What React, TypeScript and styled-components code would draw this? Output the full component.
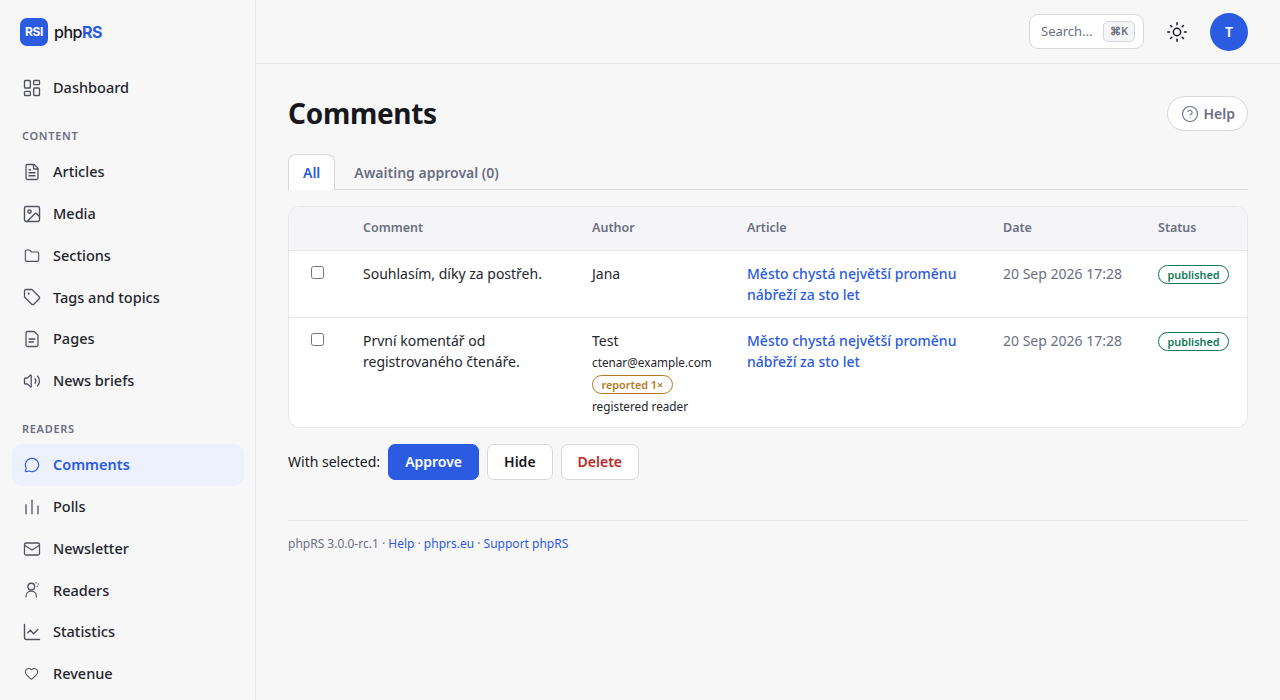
import React from 'react'
import styled, { createGlobalStyle } from 'styled-components'
import {
    LayoutDashboard,
    FileText,
    Image,
    Folder,
    Tag,
    Volume2,
    MessageCircle,
    Mail,
    ChartLine,
    Heart,
    Sun,
    CircleHelp,
} from 'lucide-react'

type DrawnIconProps = { size?: number; strokeWidth?: number }

const DrawnIcon = ({
    size,
    strokeWidth,
    children,
}: DrawnIconProps & { children: React.ReactNode }) => (
    <svg
        width={size}
        height={size}
        viewBox="0 0 24 24"
        fill="none"
        stroke="currentColor"
        strokeWidth={strokeWidth}
        strokeLinecap="round"
        strokeLinejoin="round"
    >
        {children}
    </svg>
)

const PageIcon = (props: DrawnIconProps) => (
    <DrawnIcon {...props}>
        <path d="M15 2H6a2 2 0 0 0-2 2v16a2 2 0 0 0 2 2h12a2 2 0 0 0 2-2V7z" />
        <path d="M8 12h8" />
        <path d="M8 16h6" />
    </DrawnIcon>
)

const PollIcon = (props: DrawnIconProps) => (
    <DrawnIcon {...props}>
        <path d="M4 21V9" />
        <path d="M12 21V3" />
        <path d="M20 21V11" />
    </DrawnIcon>
)

const ReaderIcon = (props: DrawnIconProps) => (
    <DrawnIcon {...props}>
        <circle cx="11" cy="7.5" r="4.5" />
        <path d="M4 21c0-4.5 3-7.5 7-7.5s7 3 7 7.5" />
        <path d="M17.5 2.5v.01M20.5 4v.01M19 7v.01" />
    </DrawnIcon>
)

const contentNav = [
    { label: 'Articles', icon: FileText, size: 18 },
    { label: 'Media', icon: Image, size: 20 },
    { label: 'Sections', icon: Folder, size: 16 },
    { label: 'Tags and topics', icon: Tag, size: 18 },
    { label: 'Pages', icon: PageIcon, size: 18 },
    { label: 'News briefs', icon: Volume2, size: 18 },
]

const readerNav = [
    { label: 'Comments', icon: MessageCircle, size: 16, active: true },
    { label: 'Polls', icon: PollIcon, size: 18 },
    { label: 'Newsletter', icon: Mail, size: 18 },
    { label: 'Readers', icon: ReaderIcon, size: 18 },
    { label: 'Statistics', icon: ChartLine, size: 20 },
    { label: 'Revenue', icon: Heart, size: 15 },
]

const article = 'Město chystá největší proměnu nábřeží za sto let'

export default function App() {
    return (
        <Shell>
            <GlobalStyle />
            <Sidebar>
                <Brand>
                    <LogoMark>RSI</LogoMark>
                    <LogoText>
                        php<span>RS</span>
                    </LogoText>
                </Brand>
                <NavItem>
                    <NavIcon>
                        <LayoutDashboard size={20} strokeWidth={1.6} />
                    </NavIcon>
                    Dashboard
                </NavItem>
                <NavHeading>Content</NavHeading>
                {contentNav.map(item => (
                    <NavItem key={item.label}>
                        <NavIcon>
                            <item.icon size={item.size} strokeWidth={1.7} />
                        </NavIcon>
                        {item.label}
                    </NavItem>
                ))}
                <NavHeading>Readers</NavHeading>
                {readerNav.map(item => (
                    <NavItem key={item.label} $active={item.active}>
                        <NavIcon $active={item.active}>
                            <item.icon size={item.size} strokeWidth={1.7} />
                        </NavIcon>
                        {item.label}
                    </NavItem>
                ))}
            </Sidebar>
            <Main>
                <Topbar>
                    <SearchBox>
                        Search…<Kbd>⌘K</Kbd>
                    </SearchBox>
                    <ThemeToggle>
                        <Sun size={22} strokeWidth={1.6} />
                    </ThemeToggle>
                    <Avatar>T</Avatar>
                </Topbar>
                <Content>
                    <TitleRow>
                        <Title>Comments</Title>
                        <HelpButton>
                            <CircleHelp size={18} strokeWidth={1.5} />
                            Help
                        </HelpButton>
                    </TitleRow>
                    <Tabs>
                        <Tab $active>All</Tab>
                        <Tab>Awaiting approval (0)</Tab>
                    </Tabs>
                    <TableCard>
                        <Table>
                            <colgroup>
                                <col style={{ width: 59 }} />
                                <col style={{ width: 229 }} />
                                <col style={{ width: 155 }} />
                                <col style={{ width: 256 }} />
                                <col style={{ width: 155 }} />
                                <col />
                            </colgroup>
                            <thead>
                                <tr>
                                    <Th />
                                    <Th>Comment</Th>
                                    <Th>Author</Th>
                                    <Th>Article</Th>
                                    <Th>Date</Th>
                                    <Th>Status</Th>
                                </tr>
                            </thead>
                            <tbody>
                                <tr>
                                    <Td>
                                        <RowCheck type="checkbox" />
                                    </Td>
                                    <Td>Souhlasím, díky za postřeh.</Td>
                                    <Td>Jana</Td>
                                    <Td>
                                        <ArticleLink>{article}</ArticleLink>
                                    </Td>
                                    <DateCell>20 Sep 2026 17:28</DateCell>
                                    <Td>
                                        <Badge $tone="green">published</Badge>
                                    </Td>
                                </tr>
                                <tr>
                                    <Td>
                                        <RowCheck type="checkbox" />
                                    </Td>
                                    <Td>První komentář od registrovaného čtenáře.</Td>
                                    <AuthorCell>
                                        Test
                                        <AuthorMeta>ctenar@example.com</AuthorMeta>
                                        <AuthorMeta>
                                            <Badge $tone="amber">reported 1×</Badge>
                                        </AuthorMeta>
                                        <AuthorMeta>registered reader</AuthorMeta>
                                    </AuthorCell>
                                    <Td>
                                        <ArticleLink>{article}</ArticleLink>
                                    </Td>
                                    <DateCell>20 Sep 2026 17:28</DateCell>
                                    <Td>
                                        <Badge $tone="green">published</Badge>
                                    </Td>
                                </tr>
                            </tbody>
                        </Table>
                    </TableCard>
                    <BulkBar>
                        <BulkLabel>With selected:</BulkLabel>
                        <Button $variant="primary">Approve</Button>
                        <Button>Hide</Button>
                        <Button $variant="danger">Delete</Button>
                    </BulkBar>
                    <Footer>
                        phpRS 3.0.0-rc.1 · <FooterLink>Help</FooterLink> ·{' '}
                        <FooterLink>phprs.eu</FooterLink> · <FooterLink>Support phpRS</FooterLink>
                    </Footer>
                </Content>
            </Main>
        </Shell>
    )
}

const GlobalStyle = createGlobalStyle`
    html, body {
        margin: 0;
        height: 100%;
        overflow: hidden;
        background: #f7f7f8;
        color: #16181d;
        font-family: "Noto Sans", sans-serif;
        font-size: 14px;
        line-height: 1.5;
    }
`

const Shell = styled.div`
    display: flex;
    height: 700px;
    overflow: hidden;
`

const Sidebar = styled.aside`
    flex: 0 0 256px;
    box-sizing: border-box;
    border-right: 1px solid #e6e7ea;
    padding: 18px 11px 0 12px;
    overflow: hidden;
`

const Brand = styled.div`
    display: flex;
    align-items: center;
    gap: 6px;
    padding-left: 8px;
    height: 28px;
    margin-bottom: 21px;
`

const LogoMark = styled.div`
    width: 28px;
    height: 28px;
    border-radius: 7px;
    background: #2b5be0;
    color: #fff;
    font-family: Inter, sans-serif;
    font-size: 12px;
    font-weight: 700;
    letter-spacing: -0.4px;
    display: flex;
    align-items: center;
    justify-content: center;
`

const LogoText = styled.div`
    font-family: Inter, sans-serif;
    font-size: 16px;
    font-weight: 500;
    letter-spacing: -0.5px;

    span {
        color: #2b5be0;
        font-weight: 700;
    }
`

const NavItem = styled.div<{ $active?: boolean }>`
    display: flex;
    align-items: center;
    gap: 12px;
    padding: 10px;
    border-radius: 10px;
    font-size: 14.5px;
    font-weight: ${({ $active }) => ($active ? 600 : 500)};
    color: ${({ $active }) => ($active ? '#2b5be0' : '#24262c')};
    background: ${({ $active }) => ($active ? '#edf1fd' : 'transparent')};
`

const NavIcon = styled.span<{ $active?: boolean }>`
    display: flex;
    flex: 0 0 19px;
    min-width: 0;
    width: 19px;
    justify-content: center;
    align-items: center;
    height: 20px;
    color: ${({ $active }) => ($active ? '#2b5be0' : '#50535c')};

    svg {
        flex: none;
    }
`

const NavHeading = styled.div`
    padding: 0 10px;
    margin: 19.5px 0 7px;
    font-size: 11px;
    font-weight: 600;
    letter-spacing: 0.7px;
    line-height: 16px;
    text-transform: uppercase;
    color: #6b6f80;
`

const Main = styled.main`
    flex: 1;
    min-width: 0;
`

const Topbar = styled.header`
    height: 64px;
    box-sizing: border-box;
    border-bottom: 1px solid #e6e7ea;
    padding: 0 32px;
    display: flex;
    align-items: center;
    justify-content: flex-end;
`

const SearchBox = styled.div`
    box-sizing: border-box;
    width: 115px;
    height: 35px;
    border: 1px solid #d5d7dc;
    border-radius: 9px;
    background: #fff;
    padding: 0 8px 0 11px;
    display: flex;
    align-items: center;
    justify-content: space-between;
    font-size: 13px;
    color: #6b6f80;
`

const Kbd = styled.span`
    box-sizing: border-box;
    height: 21px;
    width: 32px;
    border: 1px solid #d5d7dc;
    border-radius: 5px;
    background: #f4f5f6;
    font-size: 11px;
    font-weight: 600;
    color: #6b6f80;
    display: flex;
    align-items: center;
    justify-content: center;
`

const ThemeToggle = styled.div`
    display: flex;
    margin: 0 22px 0 22px;
    color: #16181d;
`

const Avatar = styled.div`
    width: 38px;
    height: 38px;
    border-radius: 50%;
    background: #2b5be0;
    color: #fff;
    font-size: 14px;
    font-weight: 600;
    display: flex;
    align-items: center;
    justify-content: center;
`

const Content = styled.div`
    padding: 32px 32px 0;
`

const TitleRow = styled.div`
    display: flex;
    align-items: center;
    justify-content: space-between;
    height: 35px;
    margin-bottom: 23px;
`

const Title = styled.h1`
    margin: 0 0 2px;
    font-size: 28px;
    font-weight: 700;
    letter-spacing: -0.3px;
    color: #16181d;
`

const HelpButton = styled.div`
    box-sizing: border-box;
    height: 35px;
    border: 1px solid #d5d7dc;
    border-radius: 18px;
    background: #fff;
    padding: 0 12px 0 13px;
    display: flex;
    align-items: center;
    gap: 5px;
    font-weight: 600;
    color: #6b6f80;
`

const Tabs = styled.div`
    display: flex;
    gap: 4px;
    border-bottom: 1px solid #d5d7dc;
    height: 35px;
`

const Tab = styled.div<{ $active?: boolean }>`
    box-sizing: border-box;
    height: 36px;
    padding: 7px 14px;
    font-weight: 600;
    border: 1px solid ${({ $active }) => ($active ? '#d5d7dc' : 'transparent')};
    border-bottom: 0;
    border-radius: 8px 8px 0 0;
    color: ${({ $active }) => ($active ? '#2b5be0' : '#6b6f80')};
    background: ${({ $active }) => ($active ? '#fff' : 'transparent')};
`

const TableCard = styled.div`
    margin-top: 16px;
    border: 1px solid #e6e7ea;
    border-radius: 12px;
    background: #fff;
    overflow: hidden;
`

const Table = styled.table`
    width: 100%;
    border-collapse: collapse;
    table-layout: fixed;

    tbody tr + tr td {
        border-top: 1px solid #e6e7ea;
    }
`

const Th = styled.th`
    height: 43px;
    box-sizing: border-box;
    padding: 0 16px 0 15px;
    background: #f5f5f7;
    border-bottom: 1px solid #e6e7ea;
    text-align: left;
    font-size: 12.5px;
    font-weight: 600;
    color: #6b6f80;
`

const Td = styled.td`
    padding: 12px 16px 12px 15px;
    vertical-align: top;
    line-height: 21px;
    font-size: 14px;
    color: #24262c;
`

const DateCell = styled(Td)`
    color: #6b6f80;
`

const AuthorCell = styled(Td)`
    padding-bottom: 10px;
`

const RowCheck = styled.input`
    margin: 3px 0 0 7px;
    width: 13px;
    height: 13px;
`

const ArticleLink = styled.span`
    color: #2b5be0;
    font-weight: 500;
`

const AuthorMeta = styled.div`
    font-size: 11.75px;
    line-height: 22px;

    &:first-of-type {
        margin-top: 0.5px;
    }
`

const Badge = styled.span<{ $tone: 'green' | 'amber' }>`
    display: inline-block;
    box-sizing: border-box;
    height: 19px;
    line-height: 17px;
    padding: 0 8.5px;
    border-radius: 10px;
    background: #fff;
    font-size: 10.85px;
    font-weight: 600;
    border: 1px solid ${({ $tone }) => ($tone === 'green' ? '#0f7a55' : '#b7791f')};
    color: ${({ $tone }) => ($tone === 'green' ? '#0f7a55' : '#b7791f')};
`

const BulkBar = styled.div`
    display: flex;
    align-items: center;
    gap: 8px;
    margin-top: 16px;
`

const BulkLabel = styled.span`
    margin-bottom: 1px;
`

const Button = styled.div<{ $variant?: 'primary' | 'danger' }>`
    box-sizing: border-box;
    height: 36px;
    padding: 0 16px 1px;
    display: flex;
    align-items: center;
    border-radius: 7px;
    font-weight: 600;
    border: 1px solid ${({ $variant }) => ($variant === 'primary' ? '#2b5be0' : '#d5d7dc')};
    background: ${({ $variant }) => ($variant === 'primary' ? '#2b5be0' : '#fff')};
    color: ${({ $variant }) =>
        $variant === 'primary' ? '#fff' : $variant === 'danger' ? '#c0291f' : '#16181d'};
`

const Footer = styled.footer`
    margin-top: 40px;
    padding-top: 14px;
    border-top: 1px solid #e6e7ea;
    font-size: 12px;
    line-height: 18px;
    color: #6b6f80;
`

const FooterLink = styled.span`
    color: #2b5be0;
`
